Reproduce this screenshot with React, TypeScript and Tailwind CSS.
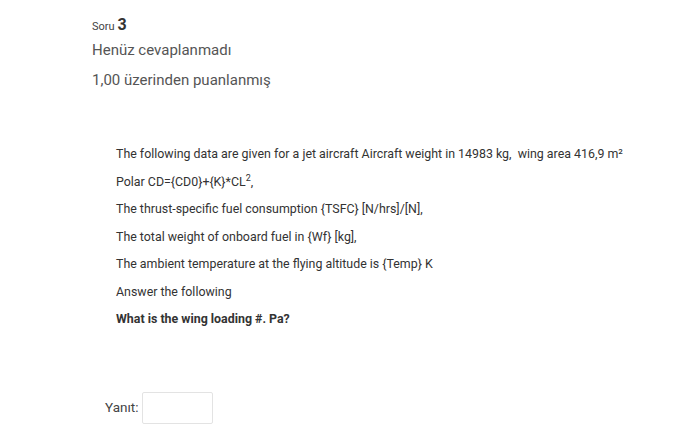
export default function App() {
  return (
    <main
      className="min-h-screen w-full bg-white text-[#3a3a3a]"
      style={{ fontFamily: "Roboto, 'Liberation Sans', sans-serif" }}
    >
      <div className="pl-[92px] pt-[15px]">
        <div className="flex items-baseline gap-[3px] leading-[20px]">
          <span className="text-[11px] text-[#444]">Soru</span>
          <span className="text-[16px] font-bold text-[#333]">3</span>
        </div>
        <div className="mt-[3px] text-[15px] leading-[20px] text-[#555]">Henüz cevaplanmadı</div>
        <div className="mt-[10px] text-[15px] leading-[20px] text-[#555]">1,00 üzerinden puanlanmış</div>
      </div>

      <div className="mt-[50px] pl-[116px] text-[12.4px] leading-[27.5px] text-[#333]">
        <p>The following data are given for a jet aircraft Aircraft weight in 14983 kg,&nbsp; wing area 416,9 m²</p>
        <p>
          Polar CD={"{CD0}"}+{"{K}"}*CL<sup className="text-[9px]">2</sup>,
        </p>
        <p>The thrust-specific fuel consumption {"{TSFC}"} [N/hrs]/[N],</p>
        <p>The total weight of onboard fuel in {"{Wf}"} [kg],</p>
        <p>The ambient temperature at the flying altitude is {"{Temp}"} K</p>
        <p>Answer the following</p>
        <p className="font-bold">What is the wing loading #. Pa?</p>
      </div>

      <div className="mt-[59px] flex items-center gap-[4px] pl-[105px]">
        <span className="text-[13.5px] text-[#444]">Yanıt:</span>
        <div className="h-[32px] w-[71px] rounded-[2px] border border-[#e3e3e3] bg-white" />
      </div>
    </main>
  );
}
